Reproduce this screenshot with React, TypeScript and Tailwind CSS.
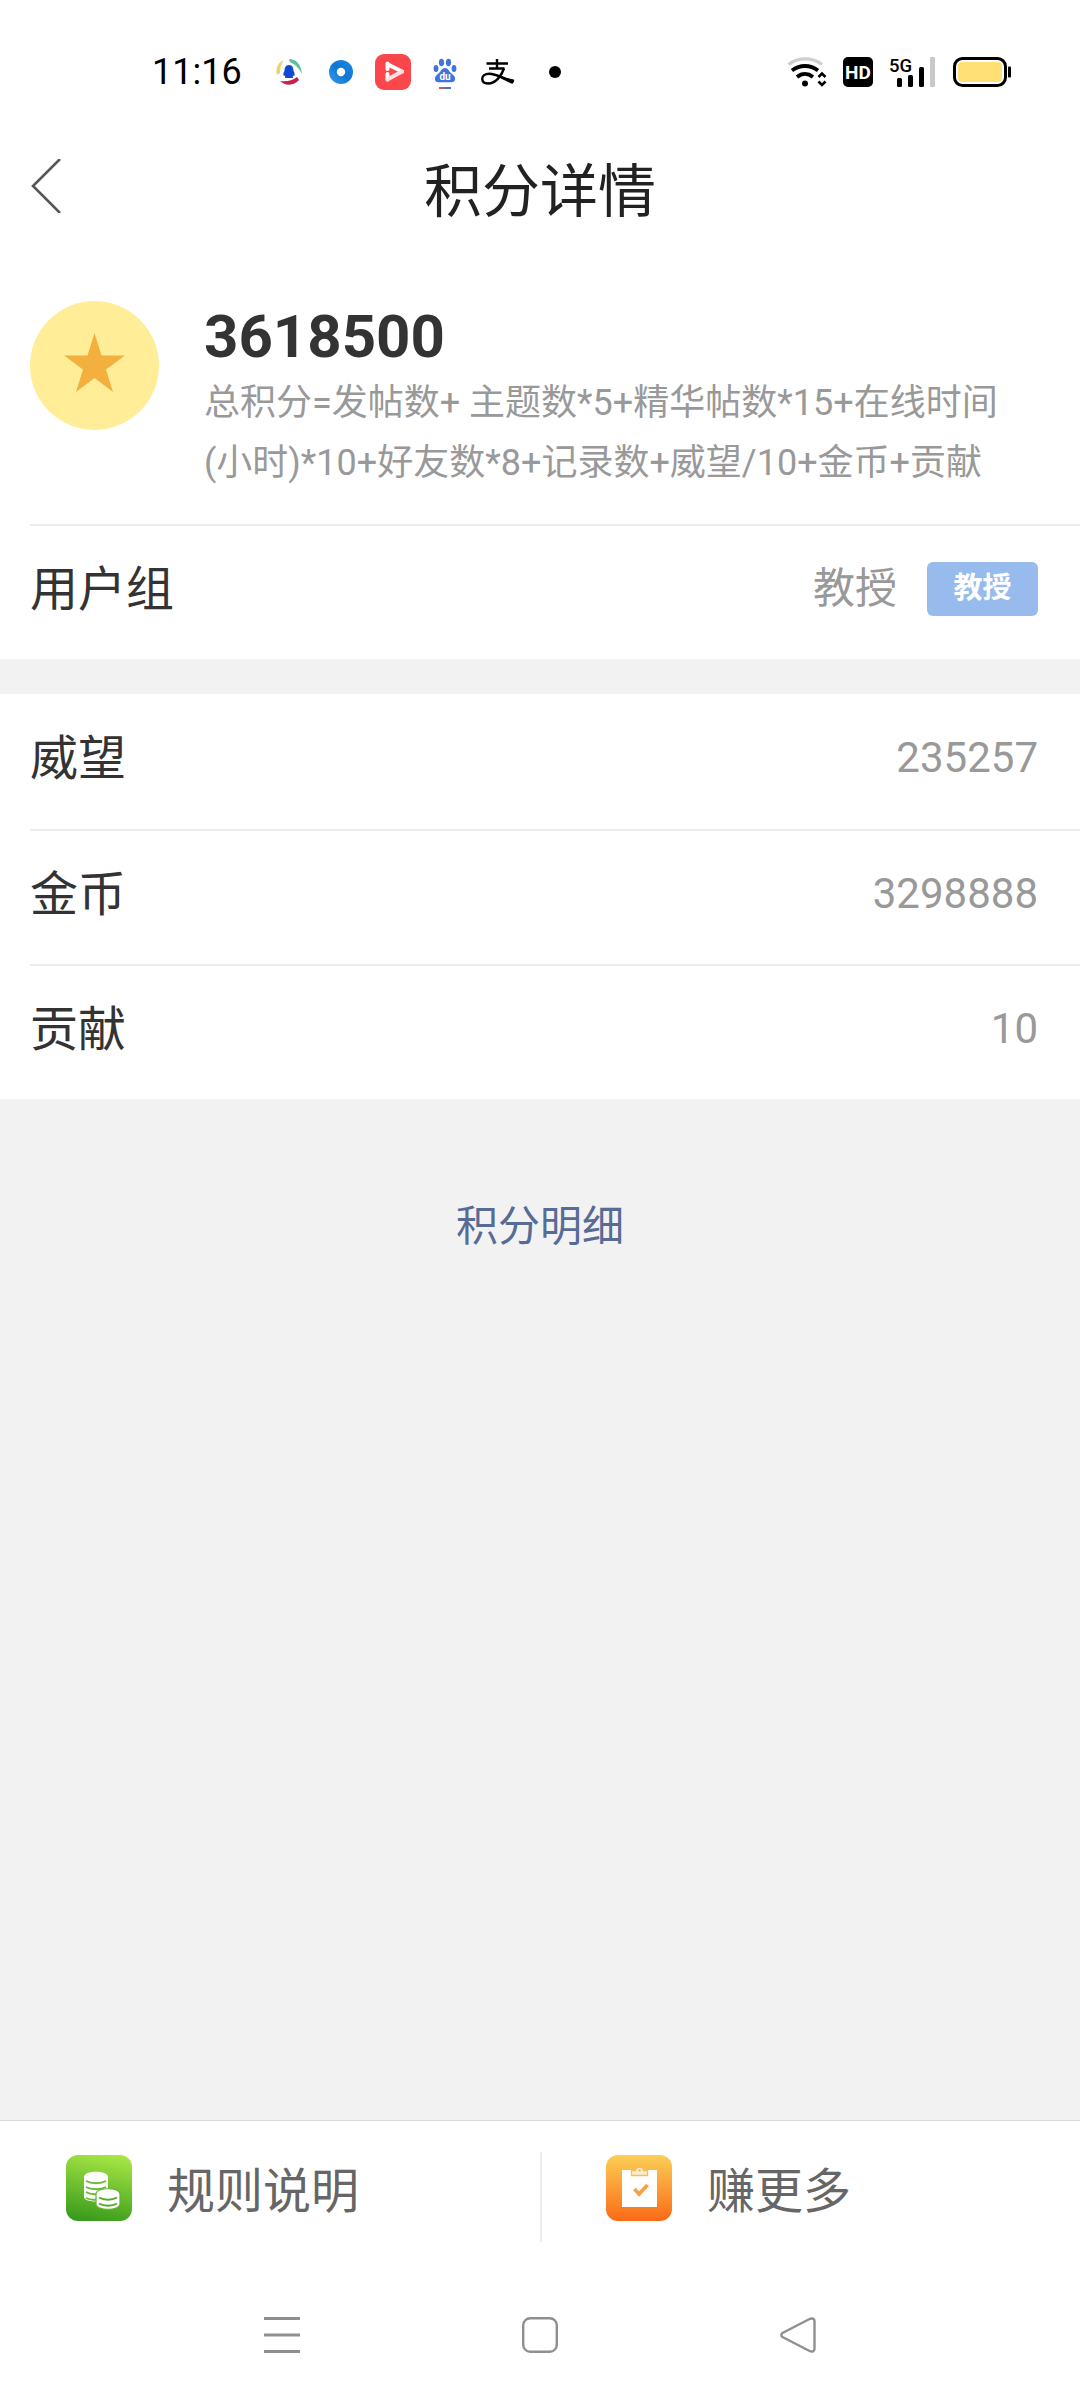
import type { ReactNode } from "react";
import clsx from "clsx";

const credits = [
  { label: "威望", value: "235257" },
  { label: "金币", value: "3298888" },
  { label: "贡献", value: "10" },
];

function StatusBar() {
  return (
    <div className="flex h-36 items-center justify-between pr-[69px] pl-[152px] text-black">
      <div className="flex items-center">
        <span className="mr-[33px] text-[36px] leading-none">11:16</span>
        {/* running app icons */}
        <svg className="mr-[26px] size-7" viewBox="0 0 28 28" fill="none">
          <path d="M2 17C0 9 4 4 9 2C6 6 5 10 5 15Z" fill="#f0d070" />
          <path d="M14 1C21 1 26 6 27 16C24 10 20 6 15 4Z" fill="#5cc09a" />
          <path d="M5 23C11 24 17 23 22 19L24 22C19 28 10 28 5 23Z" fill="#c81f4c" />
          <path d="M14 7C10.500 7 9.500 10 9.500 13C8 15 8 17 9 18L10 17.500C10.500 18.500 10 19 10 20H18C18 19 17.500 18.500 18 17.500L19 18C20 17 20 15 18.500 13C18.500 10 17.500 7 14 7Z" fill="#1247cf" />
        </svg>
        <svg className="mr-[22px] size-6" viewBox="0 0 24 24">
          <defs>
            <linearGradient id="ring" x1="0" y1="1" x2="1" y2="0">
              <stop offset="0" stopColor="#3ba0ee" />
              <stop offset="0.500" stopColor="#1176d2" />
              <stop offset="1" stopColor="#1d8ae6" />
            </linearGradient>
          </defs>
          <circle cx="12" cy="12" r="12" fill="url(#ring)" />
          <circle cx="12" cy="12" r="4.200" fill="#fff" />
        </svg>
        <svg className="mr-5 size-9" viewBox="0 0 36 36" fill="none">
          <rect width="36" height="36" rx="9" fill="#fb474b" />
          <path d="M12.500 9.500V15M12.500 20V25.500" stroke="#fff" strokeWidth="4" strokeLinecap="round" />
          <path d="M14 11L27 17.500" stroke="#fff" strokeWidth="4" strokeLinecap="round" />
          <path d="M12.500 25.500L27 17.500" stroke="#ffdede" strokeWidth="4" strokeLinecap="round" />
        </svg>
        <svg className="mr-[22px] h-9 w-7" viewBox="0 0 28 36">
          <g fill="#3f74dc">
            <ellipse cx="5" cy="14.500" rx="2.400" ry="3.500" />
            <ellipse cx="10.500" cy="8.500" rx="2.600" ry="3.700" />
            <ellipse cx="17.500" cy="8.500" rx="2.600" ry="3.700" />
            <ellipse cx="23" cy="14.500" rx="2.400" ry="3.500" />
            <path d="M14 14C17 14 18 17 20 19C23 21.500 24.500 23 24 25.500C23.500 28.500 21 28.500 14 28.200C7 28.500 4.500 28.500 4 25.500C3.500 23 5 21.500 8 19C10 17 11 14 14 14Z" />
          </g>
          <text x="14" y="26" textAnchor="middle" fontFamily="Roboto" fontWeight="700" fontSize="10" fill="#fff">du</text>
          <path d="M8 34H12" stroke="#d45a50" strokeWidth="2" />
          <path d="M12 34H20" stroke="#4f6fc0" strokeWidth="2" />
        </svg>
        <svg className="mr-[34px] h-7 w-[34px]" viewBox="0 0 34 28" fill="none" stroke="#000">
          <path d="M5.500 5.500H27M16 1V10.500M8 10.500H23.500" strokeWidth="2.400" />
          <path d="M23 10.500C20.500 17.500 15 25.500 7 25.500C3.500 25.500 1.200 23.700 1.200 20.800C1.200 18 4 15.800 8 15.800C16 15.800 23 21 33 23.500" strokeWidth="2.400" />
          <path d="M14 16.200C20 17.600 25 20.500 33 21.600L31.500 26C26 24 21 20.500 14 17.500Z" fill="#000" stroke="none" />
        </svg>
        <span className="size-3 rounded-full bg-black" />
      </div>
      <div className="flex items-center">
        <svg className="mr-4 h-[30px] w-10" viewBox="0 0 40 30" fill="none">
          <path d="M1.500 7.500C11 0 25 0 35 7.500" stroke="#cfcfcf" strokeWidth="3.400" />
          <path d="M5 13.500C13 7.500 23 7.500 31 13.500" stroke="#000" strokeWidth="3.800" />
          <path d="M10 20C15 16 21 16 26 20" stroke="#000" strokeWidth="3.800" />
          <circle cx="18" cy="26.500" r="3" fill="#000" />
          <path d="M31.500 20L35 16.500L38.500 20M31.500 24.500L35 28L38.500 24.500" stroke="#000" strokeWidth="2.600" />
        </svg>
        <svg className="mr-4 size-[30px]" viewBox="0 0 30 30">
          <rect width="30" height="30" rx="5" fill="#000" />
          <text x="15" y="22" textAnchor="middle" fontFamily="Roboto" fontWeight="700" fontSize="19" fill="#fff">HD</text>
        </svg>
        <svg className="mr-[18px] h-8 w-[46px]" viewBox="0 0 46 32">
          <text x="0" y="15.500" fontFamily="Roboto" fontWeight="500" fontSize="18.500">5G</text>
          <rect x="8" y="22" width="5" height="9" rx="1.500" />
          <rect x="19" y="19" width="5" height="12" rx="1.500" />
          <rect x="30" y="11" width="5" height="20" rx="1.500" />
          <rect x="41" y="1" width="5" height="30" rx="1" fill="#c9c9c9" />
        </svg>
        <svg className="h-[30px] w-[58px]" viewBox="0 0 58 30">
          <rect x="1.500" y="1.500" width="51" height="27" rx="8" fill="#fff" stroke="#000" strokeWidth="3" />
          <rect x="5" y="5" width="44" height="20" rx="4" fill="#ffe077" />
          <rect x="55" y="9.500" width="3" height="11" rx="1" />
        </svg>
      </div>
    </div>
  );
}

function Row({ label, divided, children }: { label: string; divided?: boolean; children: ReactNode }) {
  return (
    <div
      className={clsx(
        "flex h-[135px] items-center justify-between pr-[42px] pb-2",
        divided && "border-t-2 border-[#ececec]"
      )}
    >
      <dt className="pt-[2px] text-[48px] leading-none text-[#333]">{label}</dt>
      <dd className="flex items-center text-[42px] leading-none text-[#999]">{children}</dd>
    </div>
  );
}

function CoinsIcon() {
  return (
    <svg className="size-[66px]" viewBox="0 0 66 66">
      <defs>
        <linearGradient id="green" x1="0.600" y1="0" x2="0.400" y2="1">
          <stop offset="0" stopColor="#a5e544" />
          <stop offset="1" stopColor="#3a9c1c" />
        </linearGradient>
      </defs>
      <rect width="66" height="66" rx="12" fill="url(#green)" />
      <path d="M18 22C18 15 42 15 42 22V42C42 48 18 48 18 42Z" fill="#fff" />
      <path d="M20 26C25 29 35 29 40 26M20 32C25 35 35 35 40 32M20 37C24 39.500 28 39.500 31 39M20 43C24 45 27 45 30 44.500" stroke="#6bba35" strokeWidth="1.800" fill="none" />
      <path d="M30 39C30 32 54 32 54 39V49C54 56 30 56 30 49Z" fill="#fff" stroke="#62b331" strokeWidth="1.200" />
      <path d="M33 42.500C38 45.500 46 45.500 51 42.500M33 48.500C38 51.500 46 51.500 51 48.500" stroke="#55a92c" strokeWidth="1.800" fill="none" />
    </svg>
  );
}

function TaskIcon() {
  return (
    <svg className="size-[66px]" viewBox="0 0 66 66">
      <defs>
        <linearGradient id="orange" x1="0" y1="0" x2="0" y2="1">
          <stop offset="0" stopColor="#fbcf55" />
          <stop offset="1" stopColor="#fa6a17" />
        </linearGradient>
      </defs>
      <rect width="66" height="66" rx="12" fill="url(#orange)" />
      <rect x="16" y="15" width="35" height="37" fill="#fff" />
      <path d="M25.500 20.500V15.500H29.500C30 11 37 11 37.500 15.500H41.500V20.500Z" fill="#fdeecb" stroke="#f8bc5c" strokeWidth="1.300" />
      <circle cx="33.500" cy="15.500" r="1.200" fill="#f8bc5c" />
      <path d="M28.500 34L33 39L41.500 30" stroke="#f7a04a" strokeWidth="3.600" fill="none" />
    </svg>
  );
}

export default function App() {
  return (
    <div className="flex min-h-screen flex-col bg-[#f2f2f2] font-['Roboto','Noto_Sans_CJK_SC',sans-serif]">
      <div className="bg-white">
        <StatusBar />
        <header className="grid grid-cols-[1fr_auto_1fr] items-start px-[30px] pb-[61px]">
          <button type="button" aria-label="返回" className="justify-self-start pt-[15px]">
            <svg className="h-[54px] w-8" viewBox="0 0 32 54" fill="none" stroke="#555" strokeWidth="2.600">
              <path d="M30 0L3 27L30 54" />
            </svg>
          </button>
          <h1 className="text-[58px] leading-[96px] text-[#222]">积分详情</h1>
        </header>

        <section className="flex items-start pl-[30px]">
          <svg className="size-[129px] shrink-0" viewBox="0 0 129 129">
            <circle cx="64.500" cy="64.500" r="64.500" fill="#ffed98" />
            <path d="M64.500 32L71.500 54.500H95L76 68.500L83 91L64.500 77L46 91L53 68.500L34 54.500H57.500Z" fill="#f3b03e" />
          </svg>
          <div className="ml-[45px] pb-[31px]">
            <p className="text-[60px] leading-[72px] font-bold text-[#333]">3618500</p>
            <p className="text-[36px] leading-[60px] text-[#999]">
              总积分=发帖数+ 主题数*5+精华帖数*15+在线时间
              <br />
              (小时)*10+好友数*8+记录数+威望/10+金币+贡献
            </p>
          </div>
        </section>
        <dl className="ml-[30px]">
          <Row label="用户组" divided>
            教授
            <span className="ml-[30px] flex h-[54px] w-[111px] items-center justify-center rounded-md bg-[#98bbee] text-[29px] font-bold text-white">
              教授
            </span>
          </Row>
        </dl>
      </div>

      <div className="mt-[35px] bg-white">
        <dl className="ml-[30px]">
          {credits.map((c, i) => (
            <Row key={c.label} label={c.label} divided={i > 0}>
              {c.value}
            </Row>
          ))}
        </dl>
      </div>

      <a href="#detail" className="mt-[98px] self-center text-[42px] leading-[60px] text-[#576b95]">
        积分明细
      </a>

      <footer className="mt-auto bg-white">
        <div className="flex items-center border-t border-[#d9d9d9] py-[31px]">
          <a href="#rules" className="flex h-[90px] flex-1 items-center pb-[18px] pl-[66px] text-[48px] leading-none text-[#666]">
            <CoinsIcon />
            <span className="ml-[35px] pt-2">规则说明</span>
          </a>
          <div className="h-[90px] w-[2px] bg-[#ececec]" />
          <a href="#earn" className="flex h-[90px] flex-1 items-center pb-[18px] pl-16 text-[48px] leading-none text-[#666]">
            <TaskIcon />
            <span className="ml-[35px] pt-2">赚更多</span>
          </a>
        </div>
        <nav className="flex h-[127px] items-center justify-center gap-[222px] pb-1">
          <button type="button" aria-label="最近任务">
            <svg className="size-9" viewBox="0 0 36 36" stroke="#8f8f8f" strokeWidth="3">
              <path d="M0 1.500H36M0 18H36M0 34.500H36" />
            </svg>
          </button>
          <button type="button" aria-label="主页">
            <svg className="size-9" viewBox="0 0 36 36" fill="none" stroke="#8f8f8f" strokeWidth="2.400">
              <rect x="1.200" y="1.200" width="33.600" height="33.600" rx="7" />
            </svg>
          </button>
          <button type="button" aria-label="后退">
            <svg className="size-9" viewBox="0 0 36 36" fill="none" stroke="#8f8f8f" strokeWidth="2.400">
              <path d="M30 1.800L2.500 16C1 17 1 19 2.500 20L30 34.200C32 35 34.500 34.500 34.500 32V4C34.500 1.500 32 1 30 1.800Z" />
            </svg>
          </button>
        </nav>
      </footer>
    </div>
  );
}
